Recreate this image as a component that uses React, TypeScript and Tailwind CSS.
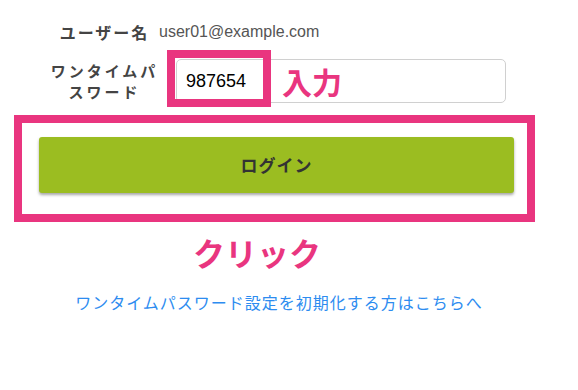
export default function App() {
  return (
    <div
      className="w-[578px] h-[390px] bg-white overflow-hidden"
      style={{ fontFamily: '"Noto Sans CJK JP", "Noto Sans", sans-serif' }}
    >
      {/* ユーザー名 */}
      <div className="flex items-center h-[24px] mt-[20px]">
        <div className="w-[109px] ml-[50px] text-center text-[16px] font-bold tracking-[2px] text-[#444] whitespace-nowrap">
          ユーザー名
        </div>
        <div
          className="text-[16px] text-[#555]"
          style={{ fontFamily: '"Liberation Sans", Arial, sans-serif' }}
        >
          user01@example.com
        </div>
      </div>

      {/* ワンタイムパスワード */}
      <div className="flex items-center h-[44px] mt-[15px]">
        <div className="w-[109px] ml-[50px] text-center text-[15px] leading-[21px] font-bold tracking-[3px] text-[#444] whitespace-nowrap">
          <div>ワンタイムパ</div>
          <div>スワード</div>
        </div>
        <div className="relative ml-[17px] w-[330px] h-[44px]">
          <input
            defaultValue="987654"
            className="w-full h-full border border-[#d0d0d0] rounded-[5px] pl-[9px] text-[18px] text-black outline-none"
            style={{ fontFamily: '"Liberation Sans", Arial, sans-serif' }}
          />
          <div className="absolute left-[-9px] top-[-9px] w-[104px] h-[57px] border-8 border-[#e9357f] pointer-events-none" />
          <div className="absolute left-[106px] inset-y-0 flex items-center text-[30px] leading-none font-bold text-[#e9357f]">
            入力
          </div>
        </div>
      </div>

      {/* ログイン */}
      <div className="mt-[12px] ml-[14px] w-[521px] border-8 border-[#e9357f] pt-[14px] pb-[21px] pl-[17px] pr-[13px]">
        <button className="w-full h-[56px] bg-[#9bbd21] rounded-[3px] shadow-[0_2px_3px_rgba(0,0,0,0.35)] text-[17px] font-bold text-[#333] tracking-[1px]">
          ログイン
        </button>
      </div>

      <div className="mt-[14px] ml-[193px] text-[32px] leading-none font-bold text-[#e9357f]">
        クリック
      </div>

      <div className="mt-[22px] w-[558px] text-center text-[16px] leading-[24px] tracking-[1px] text-[#2d8cf0]">
        <a href="#">ワンタイムパスワード設定を初期化する方はこちらへ</a>
      </div>
    </div>
  );
}
